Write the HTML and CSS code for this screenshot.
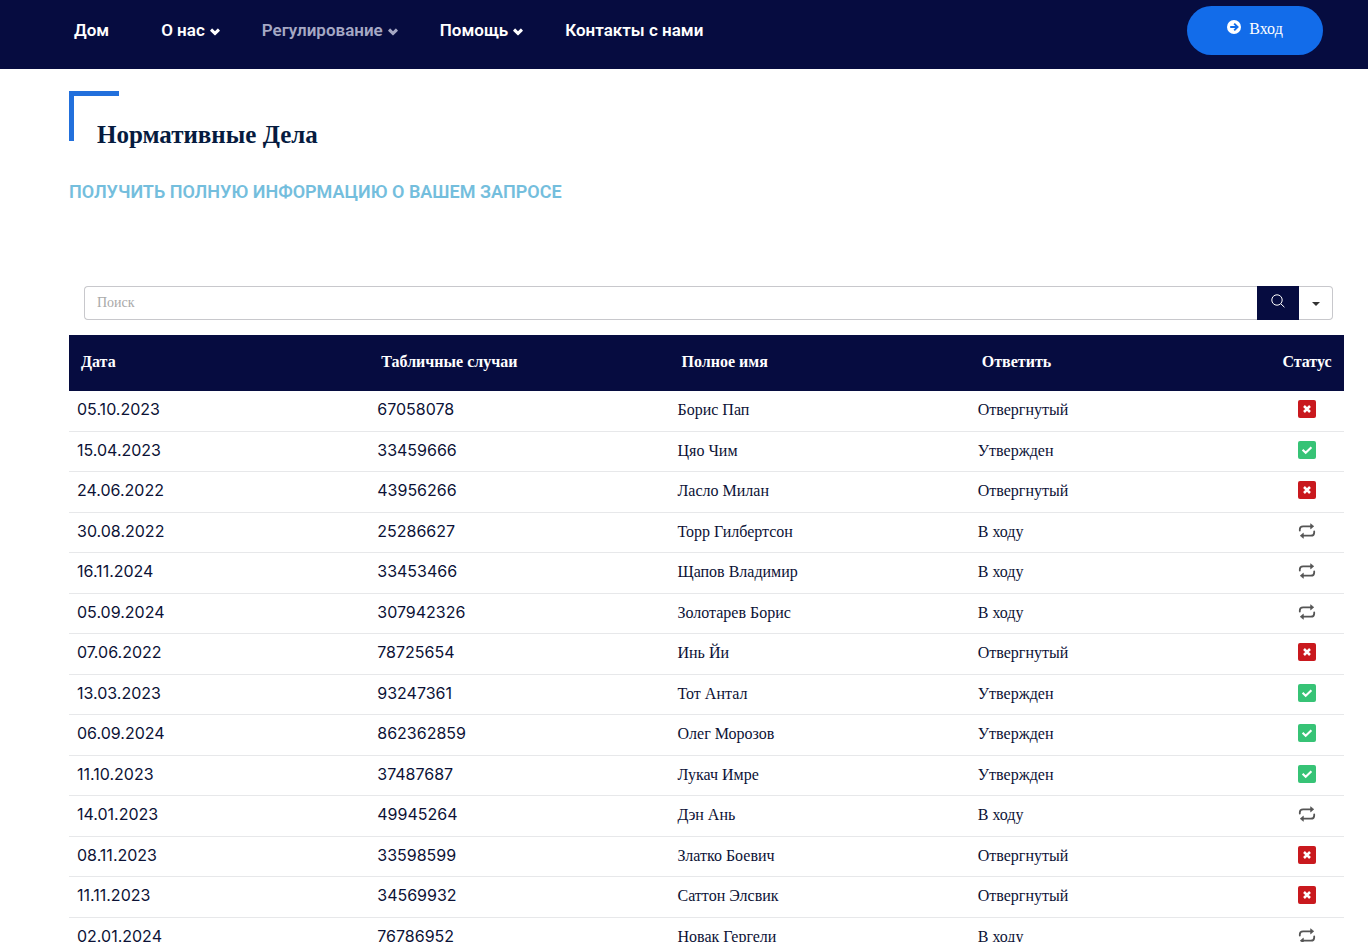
FILE: index.html
```html
<!DOCTYPE html>
<html lang="ru">
<head>
<meta charset="utf-8">
<meta name="viewport" content="width=device-width, initial-scale=1">
<title>Нормативные Дела</title>
<link rel="stylesheet" href="styles.css">
</head>
<body>
<svg class="sprite" aria-hidden="true">
  <symbol id="chevron" viewBox="0 0 448 512"><path d="M207 401 13 207c-9-9-9-25 0-34l66-66c9-9 24-9 34 0l111 111 111-111c10-9 25-9 34 0l66 66c9 9 9 25 0 34L241 401c-9 9-25 9-34 0z"/></symbol>
  <symbol id="rejected" viewBox="0 0 18 18"><rect width="18" height="18" rx="2" fill="#c9191e"/><path d="M6 6l6 6M12 6l-6 6" stroke="#fff" stroke-width="2.500" fill="none"/></symbol>
  <symbol id="approved" viewBox="0 0 18 18"><rect width="18" height="18" rx="2" fill="#37c376"/><path d="M4.600 8.700l3.100 3.100 5.700-5.600" stroke="#fff" stroke-width="2.100" fill="none"/></symbol>
  <symbol id="progress" viewBox="0 0 18 18"><path d="M1.800 8.500V7.600Q1.800 4.300 5.100 4.300H13M16.200 9.500v.9q0 3.300-3.300 3.300H5" stroke="#555" stroke-width="1.800" stroke-linecap="round" fill="none"/><path d="M12.600 1.700l3.200 2.600-3.200 2.600zM5.400 11.100L2.200 13.700l3.200 2.600z" fill="#555" stroke="#555" stroke-width=".6" stroke-linejoin="round"/></symbol>
</svg>

<header class="topbar">
  <nav class="menu">
    <a class="menu-link" href="#">Дом</a>
    <a class="menu-link" href="#">О нас<svg class="chevron"><use href="#chevron"/></svg></a>
    <a class="menu-link menu-link-active" href="#">Регулирование<svg class="chevron"><use href="#chevron"/></svg></a>
    <a class="menu-link" href="#">Помощь<svg class="chevron"><use href="#chevron"/></svg></a>
    <a class="menu-link" href="#">Контакты с нами</a>
  </nav>
  <a class="login" href="#">
    <svg class="login-icon" viewBox="0 0 14 14"><circle cx="7" cy="7" r="7" fill="#fff"/><path d="M3.200 7h6.800M7.200 3.600L10.600 7l-3.400 3.400" fill="none" stroke="#126cea" stroke-width="1.900"/></svg>
    Вход
  </a>
</header>

<main class="content">
  <h1 class="title">Нормативные Дела</h1>
  <h2 class="subtitle">ПОЛУЧИТЬ ПОЛНУЮ ИНФОРМАЦИЮ О ВАШЕМ ЗАПРОСЕ</h2>

  <form class="search">
    <input class="search-input" type="text" placeholder="Поиск" aria-label="Поиск">
    <button class="search-button" type="button" aria-label="Найти"><svg class="search-icon" viewBox="0 0 14 14"><circle cx="6" cy="6" r="5.200"/><path d="M9.800 9.800l3.600 3.400"/></svg></button>
    <button class="search-toggle" type="button" aria-label="Столбцы поиска"><svg class="caret" viewBox="0 0 8 4"><path d="M0 0h8L4 4z"/></svg></button>
  </form>

  <table class="cases">
    <thead>
      <tr><th>Дата</th><th>Табличные случаи</th><th>Полное имя</th><th>Ответить</th><th class="status">Статус</th></tr>
    </thead>
    <tbody>
      <tr><td class="num">05.10.2023</td><td class="num">67058078</td><td>Борис Пап</td><td>Отвергнутый</td><td class="status"><svg class="state"><use href="#rejected"/></svg></td></tr>
      <tr><td class="num">15.04.2023</td><td class="num">33459666</td><td>Цяо Чим</td><td>Утвержден</td><td class="status"><svg class="state"><use href="#approved"/></svg></td></tr>
      <tr><td class="num">24.06.2022</td><td class="num">43956266</td><td>Ласло Милан</td><td>Отвергнутый</td><td class="status"><svg class="state"><use href="#rejected"/></svg></td></tr>
      <tr><td class="num">30.08.2022</td><td class="num">25286627</td><td>Торр Гилбертсон</td><td>В ходу</td><td class="status"><svg class="state"><use href="#progress"/></svg></td></tr>
      <tr><td class="num">16.11.2024</td><td class="num">33453466</td><td>Щапов Владимир</td><td>В ходу</td><td class="status"><svg class="state"><use href="#progress"/></svg></td></tr>
      <tr><td class="num">05.09.2024</td><td class="num">307942326</td><td>Золотарев Борис</td><td>В ходу</td><td class="status"><svg class="state"><use href="#progress"/></svg></td></tr>
      <tr><td class="num">07.06.2022</td><td class="num">78725654</td><td>Инь Йи</td><td>Отвергнутый</td><td class="status"><svg class="state"><use href="#rejected"/></svg></td></tr>
      <tr><td class="num">13.03.2023</td><td class="num">93247361</td><td>Тот Антал</td><td>Утвержден</td><td class="status"><svg class="state"><use href="#approved"/></svg></td></tr>
      <tr><td class="num">06.09.2024</td><td class="num">862362859</td><td>Олег Морозов</td><td>Утвержден</td><td class="status"><svg class="state"><use href="#approved"/></svg></td></tr>
      <tr><td class="num">11.10.2023</td><td class="num">37487687</td><td>Лукач Имре</td><td>Утвержден</td><td class="status"><svg class="state"><use href="#approved"/></svg></td></tr>
      <tr><td class="num">14.01.2023</td><td class="num">49945264</td><td>Дэн Ань</td><td>В ходу</td><td class="status"><svg class="state"><use href="#progress"/></svg></td></tr>
      <tr><td class="num">08.11.2023</td><td class="num">33598599</td><td>Златко Боевич</td><td>Отвергнутый</td><td class="status"><svg class="state"><use href="#rejected"/></svg></td></tr>
      <tr><td class="num">11.11.2023</td><td class="num">34569932</td><td>Саттон Элсвик</td><td>Отвергнутый</td><td class="status"><svg class="state"><use href="#rejected"/></svg></td></tr>
      <tr><td class="num">02.01.2024</td><td class="num">76786952</td><td>Новак Гергели</td><td>В ходу</td><td class="status"><svg class="state"><use href="#progress"/></svg></td></tr>
    </tbody>
  </table>
</main>
</body>
</html>
```

FILE: styles.css
```css
*, *::before { box-sizing: border-box; }

body {
  margin: 0;
  background: #fff;
  color: #0c1236;
  font-family: "Liberation Serif", "Times New Roman", serif;
  font-size: 16px;
}

.sprite { display: none; }

.topbar {
  display: flex;
  justify-content: space-between;
  align-items: flex-start;
  height: 69px;
  padding: 6px 45px 0 74px;
  background: #060c40;
}

.menu {
  display: flex;
  gap: 52px;
  padding-top: 12px;
}

.menu-link {
  display: flex;
  align-items: center;
  color: #fff;
  font: 600 17px/24px Roboto, sans-serif;
  text-decoration: none;
  white-space: nowrap;
}

.menu-link:has(.chevron) { margin-right: -10px; }

.menu-link-active { color: #a5a8c4; }

.chevron {
  width: 10px;
  height: 12px;
  margin: 3px 0 0 5px;
  fill: currentColor;
}

.login {
  display: flex;
  justify-content: center;
  gap: 8px;
  width: 136px;
  height: 49px;
  padding-top: 14px;
  border-radius: 25px;
  background: #126cea;
  color: #fff;
  font-size: 16px;
  line-height: 18px;
  text-decoration: none;
}

.login-icon { width: 14px; height: 14px; }

.content { padding: 22px 24px 0 69px; }

.title {
  position: relative;
  margin: 0;
  padding: 28px 0 0 28px;
  color: #061b3f;
  font-size: 25px;
  line-height: 32px;
}

.title::before {
  content: "";
  position: absolute;
  top: 0;
  left: 0;
  width: 50px;
  height: 50px;
  border: solid #2270dc;
  border-width: 5px 0 0 5px;
}

.subtitle {
  margin: 29px 0 0;
  color: #74bedd;
  font: 600 18px/24px Roboto, sans-serif;
}

.search {
  display: flex;
  margin: 82px 11px 15px 15px;
  height: 34px;
}

.search-input {
  flex: 1;
  min-width: 0;
  padding: 0 12px;
  border: 1px solid #c8c8cc;
  border-right: 0;
  border-radius: 4px 0 0 4px;
  color: #0c1236;
  font: 14px "Liberation Serif", "Times New Roman", serif;
}

.search-input::placeholder { color: #a9a9a9; }

.search-button {
  width: 42px;
  padding: 0 0 5px;
  border: 0;
  background: #060c40;
}

.search-icon {
  width: 14px;
  height: 14px;
  vertical-align: middle;
  fill: none;
  stroke: #fff;
}

.search-toggle {
  width: 34px;
  padding: 0;
  border: 1px solid #c8c8cc;
  border-left: 0;
  border-radius: 0 4px 4px 0;
  background: #fff;
}

.caret { width: 8px; height: 4px; vertical-align: middle; fill: #333; }

.cases {
  width: 100%;
  table-layout: fixed;
  border-spacing: 0;
}

.cases th {
  height: 56px;
  padding: 0 12px 2px;
  background: #060c40;
  color: #fff;
  text-align: left;
  white-space: nowrap;
}

.cases td {
  height: 41px;
  padding: 0 8px 2px;
  border-bottom: 1px solid #e7e8ea;
  line-height: 24px;
}

.cases tr:nth-child(even) td { height: 40px; }

.cases .num {
  padding-bottom: 4px;
  font-family: Inter, sans-serif;
}

.cases .status {
  width: 74px;
  text-align: center;
}

.cases td.status { padding: 0 0 6px; }

.state { width: 18px; height: 18px; vertical-align: middle; }
```
